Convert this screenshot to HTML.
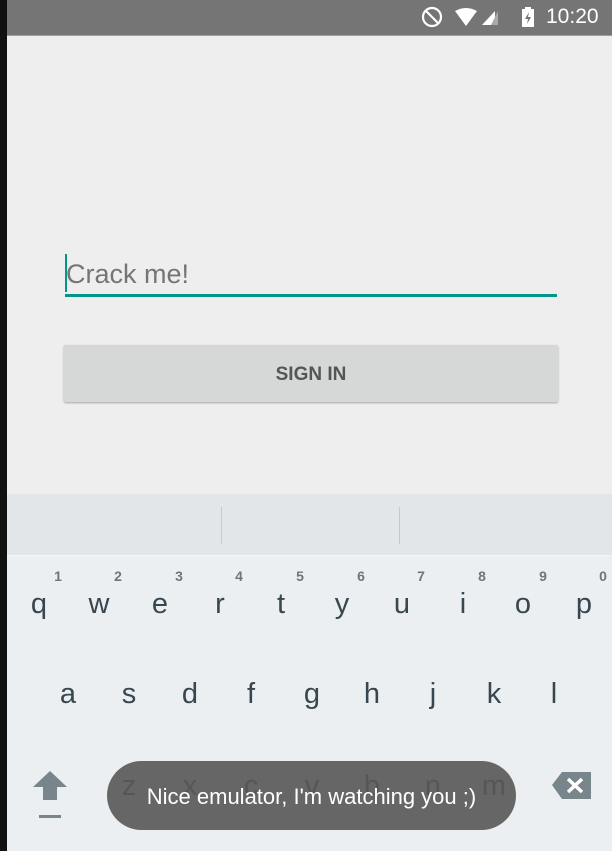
<!DOCTYPE html>
<html><head><style>
body{margin:0;width:612px;height:851px;overflow:hidden;background:#eeeeee;font-family:"Liberation Sans",sans-serif;position:relative}
.a{position:absolute}
.k{position:absolute;font-size:29px;color:#37474f;width:40px;text-align:center;margin-left:-20px}
.z{position:absolute;font-size:29px;color:#565656;width:40px;text-align:center;margin-left:-20px}
.n{position:absolute;font-size:14px;font-weight:bold;color:#6b767d;width:20px;text-align:center;margin-left:-10px}
</style></head><body>
<div class="a" style="left:0;top:0;width:7px;height:851px;background:#111"></div>
<div class="a" style="left:7px;top:0;width:605px;height:35px;background:#757575"></div>
<div class="a" style="left:7px;top:35px;width:605px;height:1px;background:#9e9e9e"></div>
<svg class="a" style="left:420px;top:5px" width="140" height="26" viewBox="0 0 140 26">
<circle cx="12" cy="12" r="9" fill="none" stroke="#fff" stroke-width="2.2"/><line x1="6" y1="6" x2="18" y2="18" stroke="#fff" stroke-width="2.2"/>
<path d="M35 6 Q46 0 57 6 L46 21Z" fill="#fff"/>
<path d="M62 20 L75 6 L75 20Z" fill="#fff"/>
<path d="M71 20 L78 6 L78 20Z" fill="#aaa"/>
<rect x="102" y="4" width="12" height="18" fill="#fff"/><rect x="105" y="2" width="6" height="3" fill="#fff"/>
<path d="M109 7 L105 14 L108 14 L107 19 L111 12 L108 12Z" fill="#757575"/>
</svg>
<div class="a" style="left:546px;top:5px;font-size:21px;color:#fff">10:20</div>
<div class="a" style="left:65px;top:254px;width:2px;height:38px;background:#009688"></div>
<div class="a" style="left:66px;top:259px;font-size:27px;color:#757575">Crack me!</div>
<div class="a" style="left:65px;top:294px;width:492px;height:3px;background:#009688"></div>
<div class="a" style="left:64px;top:345px;width:494px;height:57px;background:#d6d7d7;border-radius:2px;box-shadow:0 1px 2px rgba(0,0,0,.3);text-align:center;line-height:59px;font-size:19px;font-weight:bold;color:#555"><span>SIGN IN</span></div>
<div class="a" style="left:7px;top:494px;width:605px;height:61px;background:#e3e6e9"></div>
<div class="a" style="left:221px;top:507px;width:1px;height:37px;background:#c5c9cc"></div>
<div class="a" style="left:399px;top:507px;width:1px;height:37px;background:#c5c9cc"></div>
<div class="a" style="left:7px;top:555px;width:605px;height:1px;background:#f5f6f7"></div>
<div class="a" style="left:7px;top:556px;width:605px;height:295px;background:#eceff1"></div>
<div class="n" style="left:58px;top:568px">1</div><div class="k" style="left:39px;top:588px">q</div>
<div class="n" style="left:118px;top:568px">2</div><div class="k" style="left:99px;top:588px">w</div>
<div class="n" style="left:179px;top:568px">3</div><div class="k" style="left:160px;top:588px">e</div>
<div class="n" style="left:239px;top:568px">4</div><div class="k" style="left:220px;top:588px">r</div>
<div class="n" style="left:300px;top:568px">5</div><div class="k" style="left:281px;top:588px">t</div>
<div class="n" style="left:361px;top:568px">6</div><div class="k" style="left:342px;top:588px">y</div>
<div class="n" style="left:421px;top:568px">7</div><div class="k" style="left:402px;top:588px">u</div>
<div class="n" style="left:482px;top:568px">8</div><div class="k" style="left:463px;top:588px">i</div>
<div class="n" style="left:543px;top:568px">9</div><div class="k" style="left:523px;top:588px">o</div>
<div class="n" style="left:603px;top:568px">0</div><div class="k" style="left:584px;top:588px">p</div>
<div class="k" style="left:68px;top:678px">a</div><div class="k" style="left:129px;top:678px">s</div>
<div class="k" style="left:190px;top:678px">d</div><div class="k" style="left:251px;top:678px">f</div>
<div class="k" style="left:312px;top:678px">g</div><div class="k" style="left:372px;top:678px">h</div>
<div class="k" style="left:433px;top:678px">j</div><div class="k" style="left:494px;top:678px">k</div>
<div class="k" style="left:554px;top:678px">l</div>
<svg class="a" style="left:30px;top:770px" width="42" height="52"><path d="M3 17 L20 1 L37 17 L27 17 L27 30 L13 30 L13 17Z" fill="#78868c"/><rect x="9" y="45" width="22" height="3" fill="#78868c"/></svg>
<svg class="a" style="left:552px;top:771px" width="40" height="30"><path d="M0 14 L10 1 L39 1 L39 28 L10 28Z" fill="#78868c"/><path d="M16 8 L30 21 M30 8 L16 21" stroke="#fff" stroke-width="3.5"/></svg>
<div class="a" style="left:107px;top:761px;width:409px;height:69px;background:#666;border-radius:35px"></div>
<div class="z" style="left:129px;top:770px">z</div><div class="z" style="left:190px;top:770px">x</div>
<div class="z" style="left:251px;top:770px">c</div><div class="z" style="left:312px;top:770px">v</div>
<div class="z" style="left:372px;top:770px">b</div><div class="z" style="left:433px;top:770px">n</div>
<div class="z" style="left:494px;top:770px">m</div>
<div class="a" style="left:107px;top:761px;width:409px;height:69px;text-align:center;line-height:72px;color:#fff;font-size:22px;font-family:'Liberation Sans Narrow','Liberation Sans',sans-serif">Nice emulator, I'm watching you ;)</div>
</body></html>
